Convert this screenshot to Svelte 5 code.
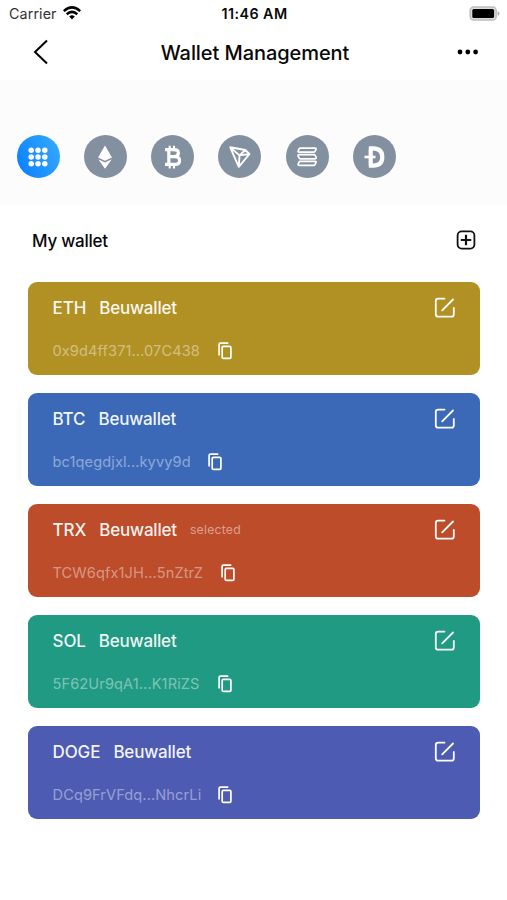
<script>
  const coins = ['all', 'eth', 'btc', 'trx', 'sol', 'doge'];
  const dots = [7.2, 14, 20.8];
  const wallets = [
    { coin: 'ETH', address: '0x9d4ff371...07C438', color: '#b29124', text: 147 },
    { coin: 'BTC', address: 'bc1qegdjxl...kyvy9d', color: '#3b69b8', text: 137 },
    { coin: 'TRX', address: 'TCW6qfx1JH...5nZtrZ', color: '#bc4c2a', text: 150, selected: true },
    { coin: 'SOL', address: '5F62Ur9qA1...K1RiZS', color: '#209a82', text: 147.5 },
    { coin: 'DOGE', address: 'DCq9FrVFdq...NhcrLi', color: '#4e5bb3', text: 147.5 }
  ];
</script>

<main>
  <div class="status">
    <div class="carrier">
      <span>Carrier</span>
      <svg width="18" height="14" viewBox="0 0 18 14" fill="none" stroke="#000" stroke-width="2.5">
        <path d="M.8 5.2Q9-2.4 17.2 5.2" />
        <path d="M3.7 8.2Q9 3.5 14.3 8.2" />
        <path d="M6.2 10.5Q9 8.2 11.8 10.5L9 13.4Z" fill="#000" stroke="none" />
      </svg>
    </div>
    <span class="time">11:46 AM</span>
    <svg class="battery" width="31" height="15" viewBox="0 0 31 15">
      <rect x="1.2" y="1" width="26" height="13" rx="3.6" fill="#ddd" stroke="#bdbdbd" stroke-width="1.5" />
      <rect x="3.3" y="3" width="21.8" height="9" rx="1.6" />
      <path d="M28.6 5.2Q30.5 5.7 30.5 7.5T28.6 9.8Z" fill="#aaa" />
    </svg>
  </div>
  <header>
    <svg width="16" height="26" viewBox="0 0 16 26" fill="none" stroke="#000" stroke-width="2"><path d="M14 1.5L2 13L14 24.5" /></svg>
    <h1>Wallet Management</h1>
    <svg width="22" height="6" viewBox="0 0 22 6"><circle cx="3" cy="3" r="2.4" /><circle cx="10.8" cy="3" r="2.4" /><circle cx="18.6" cy="3" r="2.4" /></svg>
  </header>
  <nav>
    {#each coins as coin}
      <div class="coin" class:active={coin === 'all'}>
        <svg width="28" height="28" viewBox="0 0 28 28" fill="none" stroke="#fff">
          {#if coin === 'all'}
            {#each dots as y}{#each dots as x}<circle cx={x} cy={y} r="2.75" fill="#fff" stroke="none" />{/each}{/each}
          {:else if coin === 'eth'}
            <path d="M14 2.5L21 14.5L14 17.7L7 14.5ZM7.2 16.2L14 19.4L20.8 16.2L14 25.8Z" fill="#fff" stroke="none" />
          {:else if coin === 'btc'}
            <path d="M6 6.6H15Q19.4 6.6 19.4 10.1T15 13.6H9.8M6 21.4H15.8Q20.6 21.4 20.6 17.5T15.8 13.6M9.8 6.6V21.4" stroke-width="3.2" />
            <path d="M10.7 2.8V6.5M15 2.8V6.5M10.7 21.5V25.4M15 21.5V25.4" stroke-width="2.1" />
          {:else if coin === 'trx'}
            <path d="M4.2 4.3L19.3 7L23.5 11L12.8 23.8ZM4.2 4.3L13.5 12.4L19.3 7M13.5 12.4L23.5 11M13.5 12.4L12.8 23.8" stroke-width="1.9" stroke-linejoin="round" />
          {:else if coin === 'sol'}
            <path d="M7.3 5.2H22Q23.8 5.2 22.8 6.8L22 8.4Q21.5 9.2 20.6 9.2H6.2Q4.5 9.2 5.3 7.6L6 6Q6.4 5.2 7.3 5.2ZM6.2 11.7H20.7Q21.8 11.7 22.3 12.7L23 14.2Q23.7 15.8 22 15.8H7.5Q6.5 15.8 6 14.8L5.2 13.2Q4.5 11.7 6.2 11.7ZM7.3 18.3H22Q23.8 18.3 22.8 19.9L22 21.5Q21.5 22.3 20.6 22.3H6.2Q4.5 22.3 5.3 20.7L6 19.1Q6.4 18.3 7.3 18.3Z" stroke-width="1.7" />
          {:else}
            <path d="M8.8 5.4H13Q22.3 5.4 22.3 14T13 22.6H8.8M10.7 5.4V22.6" stroke-width="4.2" />
            <path d="M4.5 14H15.5" stroke-width="2.6" />
          {/if}
        </svg>
      </div>
    {/each}
  </nav>
  <section>
    <div class="heading">
      <h2>My wallet</h2>
      <svg width="20" height="20" viewBox="0 0 20 20" fill="none" stroke="#111"><rect x="1.6" y="1.4" width="16.8" height="17.2" rx="4" stroke-width="1.8" /><path d="M10 4.8V15.2M4.8 10H15.2" stroke-width="2.2" /></svg>
    </div>
    <div class="cards">
      {#each wallets as w}
        <article style:background={w.color}>
          <div class="top">
            <span class="name">{w.coin}</span>
            <span class="name wallet">Beuwallet</span>
            {#if w.selected}<span class="selected">selected</span>{/if}
            <svg class="edit" width="22" height="22" viewBox="0 0 22 22" fill="none" stroke="#fff" stroke-width="1.8" stroke-linecap="round"><path d="M10.5 1.6H4.2Q1.8 1.6 1.8 4V17.4Q1.8 19.6 4.2 19.6H17.6Q19.8 19.6 19.8 17.4V11M8.2 13.3L19 2.5" /></svg>
          </div>
          <div class="bottom">
            <span class="address" style:width="{w.text}px">{w.address}</span>
            <svg width="15" height="18" viewBox="0 0 15 18" fill="none" stroke="#fff" stroke-width="1.7"><path d="M1.1 13.5V2.5Q1.1 1.1 2.5 1.1H10.3" /><rect x="4.2" y="4.4" width="8.7" height="12" rx="1.2" /></svg>
          </div>
        </article>
      {/each}
    </div>
  </section>
</main>

<style>
  :global(body) { margin: 0; background: #fff; }
  main { width: 507px; height: 900px; overflow: hidden; background: #fff; font-family: Inter, sans-serif; color: #080808; box-sizing: border-box; }
  svg { display: block; flex: none; }
  .status { height: 27px; display: grid; grid-template-columns: 1fr auto 1fr; align-items: center; padding: 0 7px 0 9px; box-sizing: border-box; font-size: 14.3px; line-height: 27px; }
  .carrier { display: flex; align-items: center; gap: 6px; color: #333; letter-spacing: .1px; }
  .carrier svg { margin-bottom: 1px; }
  .time { font-weight: 600; font-size: 14.3px; letter-spacing: .45px; }
  .battery { justify-self: end; margin-bottom: 1px; }
  header { height: 53px; display: flex; align-items: center; justify-content: space-between; padding: 0 28px 0 33px; box-sizing: border-box; }
  header svg { margin-bottom: 3px; }
  h1 { margin: 0 0 2px 4px; font-size: 20px; line-height: 28px; letter-spacing: -.07px; font-weight: 500; white-space: nowrap; }
  nav { height: 125px; display: flex; align-items: center; gap: 24.3px; padding: 28px 16.5px 0; box-sizing: border-box; background: #fcfcfc; }
  .coin { width: 43px; height: 43px; border-radius: 50%; background: #83909f; display: flex; align-items: center; justify-content: center; flex: none; }
  .active { background: linear-gradient(65deg, #087cff, #37adff); }
  section { padding: 0 27px 0 28px; }
  .heading { height: 76.5px; display: flex; justify-content: space-between; align-items: center; padding: 0 4px; box-sizing: border-box; }
  .heading svg { margin: 0 0 6px; }
  h2 { font-size: 17px; line-height: 24px; letter-spacing: -.25px; font-weight: 500; margin: 0 0 5px; }
  .cards { display: flex; flex-direction: column; gap: 18.2px; }
  article { height: 93px; border-radius: 9px; padding: 15px 24px 0 24.5px; box-sizing: border-box; color: #fff; }
  .top { height: 22px; display: flex; align-items: center; gap: 13px; white-space: nowrap; }
  .name { font-size: 17px; font-weight: 500; line-height: 22px; letter-spacing: -.1px; color: rgba(255,255,255,.94); }
  .wallet { letter-spacing: -.2px; }
  .selected { font-size: 12.3px; letter-spacing: .2px; color: rgba(255,255,255,.48); }
  .edit { margin-left: auto; }
  .bottom { height: 22px; display: flex; align-items: center; gap: 18px; margin-top: 21px; }
  .address { font-size: 14.6px; line-height: 22px; letter-spacing: .1px; white-space: nowrap; color: rgba(255,255,255,.43); }
</style>
